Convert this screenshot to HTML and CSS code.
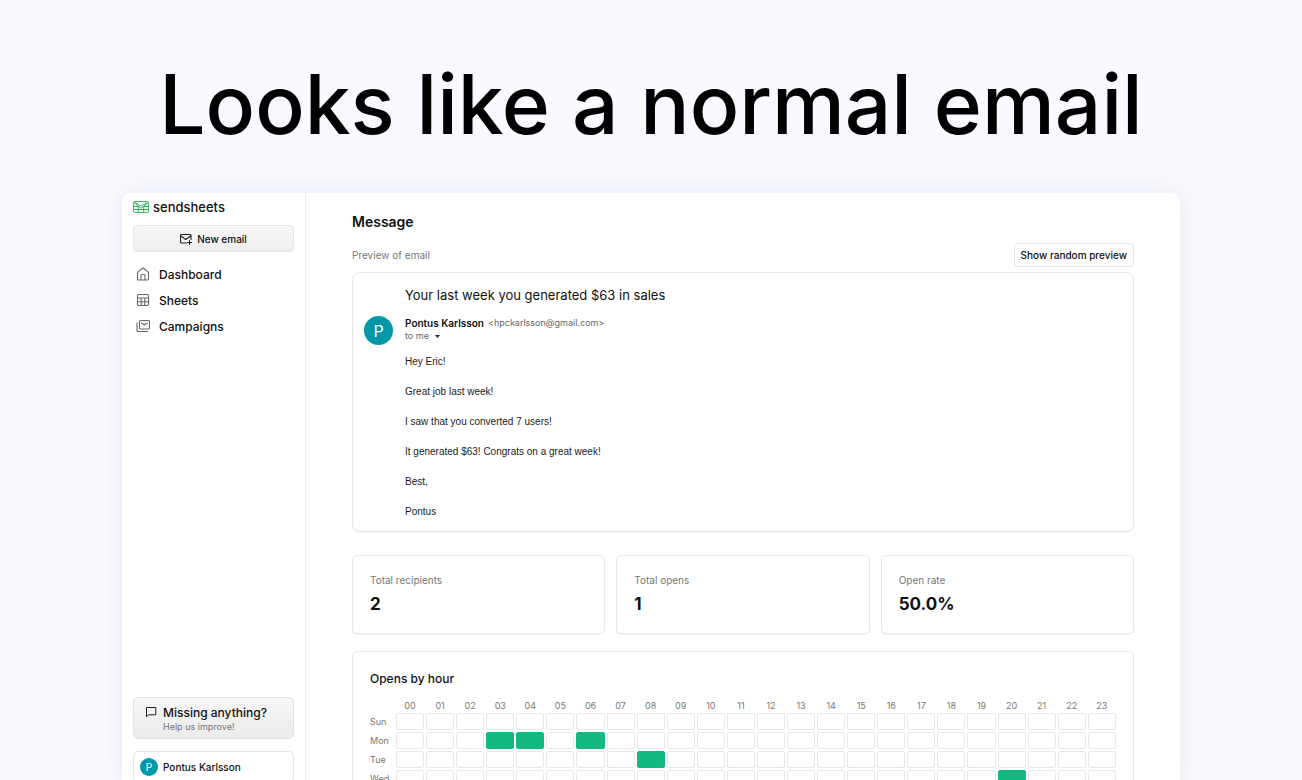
FILE: index.html
```html
<!DOCTYPE html>
<html lang="en">
<head>
    <meta charset="UTF-8">
    <meta name="viewport" content="width=device-width, initial-scale=1.0">
    <title>Sendsheets</title>
    <link rel="stylesheet" href="styles.css">
</head>
<body>
    <h1 class="headline">Looks like a normal email</h1>

    <div class="app">
        <aside class="sidebar">
            <a href="#" class="logo">
                <svg width="16" height="12" viewBox="0 0 16 12" fill="none" stroke="#35ad5c">
                    <rect x="0.6" y="0.6" width="14.8" height="10.8" rx="0.8"/>
                    <path d="M0.800 1.200l4.700 4.200M15.200 1.200l-4.700 4.200M2.500 1.800l4.300 2.700a2.200 2.200 0 0 0 2.400 0l4.300-2.700M0.600 5.500h4.900L8 7.200l2.500-1.700h4.900M0.600 8.500h14.800M5.300 5.500v6M10.700 5.500v6"/>
                </svg>
                sendsheets
            </a>
            <button class="new-email">
                <svg width="12" height="12" viewBox="0 0 24 24" fill="none" stroke="#222" stroke-width="2.2" stroke-linecap="round" stroke-linejoin="round">
                    <path d="M13 20H3a2 2 0 0 1-2-2V5a2 2 0 0 1 2-2h17a2 2 0 0 1 2 2v8M2 6l9.500 7L21 6M19 15v8M15 19h8"/>
                </svg>
                New email
            </button>
            <nav class="menu">
                <a href="#">
                    <svg width="14" height="14" viewBox="0 0 14 14" fill="none" stroke="#666" stroke-width="1.1" stroke-linejoin="round">
                        <path d="M1.500 5.700a1 1 0 0 1 0.400-0.800L6.400 1.300a1 1 0 0 1 1.200 0l4.500 3.600a1 1 0 0 1 0.400 0.800V12a1 1 0 0 1-1 1h-9a1 1 0 0 1-1-1zM5 13V8.500a1 1 0 0 1 1-1h2a1 1 0 0 1 1 1V13"/>
                    </svg>
                    Dashboard
                </a>
                <a href="#">
                    <svg width="14" height="14" viewBox="0 0 14 14" fill="none" stroke="#666" stroke-width="1.1">
                        <rect x="1.500" y="1.500" width="11" height="11" rx="1.200"/>
                        <path d="M1.500 5h11M1.500 8.700h11M5.200 5v7.500M8.800 5v7.500"/>
                    </svg>
                    Sheets
                </a>
                <a href="#">
                    <svg width="14" height="14" viewBox="0 0 14 14" fill="none" stroke="#666" stroke-width="1.1" stroke-linecap="round" stroke-linejoin="round">
                        <rect x="3.500" y="1.500" width="10" height="8.500" rx="1.200"/>
                        <path d="M5.500 4l3 2 3-2M1 3.800v7.700a1 1 0 0 0 1 1h9.500"/>
                    </svg>
                    Campaigns
                </a>
            </nav>
            <div class="sidebar-bottom">
                <button class="feedback">
                    <svg width="12" height="12" viewBox="0 0 12 12" fill="none" stroke="#222" stroke-linejoin="round">
                        <path d="M1.500 1.500h9.300v7.300H3.500L1.500 10.800z"/>
                    </svg>
                    <span>
                        <strong>Missing anything?</strong>
                        <small>Help us improve!</small>
                    </span>
                </button>
                <button class="user">
                    <span class="avatar avatar-small">P</span>
                    Pontus Karlsson
                </button>
            </div>
        </aside>

        <main class="content">
            <h2>Message</h2>
            <div class="preview-bar">
                <span>Preview of email</span>
                <button class="random-preview">Show random preview</button>
            </div>

            <article class="card email">
                <h3>Your last week you generated $63 in sales</h3>
                <span class="avatar">P</span>
                <div class="email-body">
                    <div class="sender">
                        <strong>Pontus Karlsson</strong>
                        <span>&lt;hpckarlsson@gmail.com&gt;</span>
                    </div>
                    <div class="recipient">
                        to me
                        <svg width="5" height="3" viewBox="0 0 5 3"><path d="M0 0h5L2.500 3z" fill="#222"/></svg>
                    </div>
                    <div class="email-text">
                        <p>Hey Eric!</p>
                        <p>Great job last week!</p>
                        <p>I saw that you converted 7 users!</p>
                        <p>It generated $63! Congrats on a great week!</p>
                        <p>Best,</p>
                        <p>Pontus</p>
                    </div>
                </div>
            </article>

            <section class="stats">
                <div class="card stat">
                    <p>Total recipients</p>
                    <strong>2</strong>
                </div>
                <div class="card stat">
                    <p>Total opens</p>
                    <strong>1</strong>
                </div>
                <div class="card stat">
                    <p>Open rate</p>
                    <strong>50.0%</strong>
                </div>
            </section>

            <section class="card hours">
                <h3>Opens by hour</h3>
                <table>
                    <thead>
                        <tr id="hour-row"><td class="day"></td></tr>
                    </thead>
                    <tbody id="hour-body"></tbody>
                </table>
            </section>
        </main>
    </div>

    <script>
        const days = ['Sun', 'Mon', 'Tue', 'Wed', 'Thu', 'Fri', 'Sat'];
        const opens = { Mon: [3, 4, 6], Tue: [8], Wed: [20] };

        const hourRow = document.getElementById('hour-row');
        for (let h = 0; h < 24; h++) {
            const th = document.createElement('th');
            th.scope = 'col';
            th.textContent = String(h).padStart(2, '0');
            hourRow.appendChild(th);
        }

        const hourBody = document.getElementById('hour-body');
        days.forEach(day => {
            const row = document.createElement('tr');
            row.innerHTML = `<th scope="row">${day}</th>`;
            for (let h = 0; h < 24; h++) {
                const cell = document.createElement('td');
                cell.className = (opens[day] || []).includes(h) ? 'cell active' : 'cell';
                row.appendChild(cell);
            }
            hourBody.appendChild(row);
        });
    </script>
</body>
</html>
```
FILE: styles.css
```css
* {
    margin: 0;
    padding: 0;
    box-sizing: border-box;
}

body {
    height: 100vh;
    overflow: hidden;
    display: flex;
    flex-direction: column;
    padding: 54px 122px 0;
    background-color: #f9faff;
    color: #111;
    font-family: 'Inter', sans-serif;
    font-size: 10px;
}

button {
    font-family: inherit;
    color: inherit;
    cursor: pointer;
}

a {
    color: inherit;
    text-decoration: none;
}

svg {
    flex-shrink: 0;
}

.headline {
    margin: 0 -60px 37px;
    font-size: 82px;
    line-height: 102px;
    font-weight: 500;
    color: #000;
    text-align: center;
    white-space: nowrap;
}

.app {
    flex: 1;
    min-height: 0;
    display: flex;
    margin-bottom: -2px;
    background: white;
    border-radius: 8px 8px 0 0;
    box-shadow: 0 0 24px rgba(30, 40, 90, 0.08);
}

/* Sidebar */
.sidebar {
    width: 184px;
    flex-shrink: 0;
    display: flex;
    flex-direction: column;
    padding: 6px 11px 0;
    border-right: 1px solid #ebebeb;
}

.logo {
    display: flex;
    align-items: center;
    gap: 4px;
    margin-bottom: 10px;
    font-size: 13px;
    line-height: 16px;
    font-weight: 500;
}

.new-email {
    display: flex;
    align-items: center;
    justify-content: center;
    gap: 5px;
    height: 27px;
    border: 1px solid #e5e5e5;
    border-radius: 4px;
    background: linear-gradient(#f6f6f6, #eee);
    font-size: 10px;
    font-weight: 500;
}

.menu {
    display: flex;
    flex-direction: column;
    padding: 9px 3px;
}

.menu a {
    display: flex;
    align-items: center;
    gap: 9px;
    height: 26px;
    font-size: 12px;
    font-weight: 500;
}

.sidebar-bottom {
    display: flex;
    flex-direction: column;
    gap: 12px;
    margin-top: auto;
}

.feedback {
    display: flex;
    gap: 6px;
    padding: 8px 11px 5px;
    border: 1px solid #e2e2e2;
    border-radius: 5px;
    background: linear-gradient(#f6f6f6, #ebebeb);
    text-align: left;
}

.feedback strong,
.feedback small {
    display: block;
}

.feedback strong {
    font-size: 12px;
    line-height: 14px;
    font-weight: 500;
}

.feedback small {
    font-size: 9px;
    line-height: 13px;
    color: #777;
}

.user {
    display: flex;
    align-items: center;
    gap: 5px;
    height: 31px;
    padding: 0 6px;
    border: 1px solid #e5e5e5;
    border-radius: 5px;
    background: white;
    font-size: 10px;
    font-weight: 500;
}

.avatar {
    display: flex;
    align-items: center;
    justify-content: center;
    width: 29px;
    height: 29px;
    border-radius: 50%;
    background: #0097a7;
    color: white;
    font-size: 16px;
    font-weight: 400;
}

.avatar-small {
    width: 18px;
    height: 18px;
    font-size: 10px;
}

/* Main content */
.content {
    flex: 1;
    min-width: 0;
    padding: 20px 46px 0;
}

.content h2 {
    font-size: 14px;
    line-height: 18px;
    font-weight: 600;
}

.preview-bar {
    display: flex;
    align-items: center;
    justify-content: space-between;
    margin: 12px 0 5px;
    color: #777;
}

.random-preview {
    height: 24px;
    padding: 0 6px;
    border: 1px solid #e5e5e5;
    border-radius: 4px;
    background: white;
    color: #111;
    font-size: 10px;
    font-weight: 500;
}

.card {
    border: 1px solid #e8e8e8;
    border-radius: 5px;
    background: white;
    box-shadow: 0 1px 1px rgba(0, 0, 0, 0.05);
}

.email {
    display: grid;
    grid-template-columns: 29px 1fr;
    gap: 12px;
    padding: 13px 11px 12px;
    border-radius: 8px;
}

.email h3 {
    grid-column: 2;
    font-size: 13px;
    line-height: 18px;
    font-weight: 400;
}

.sender {
    display: flex;
    align-items: center;
    gap: 4px;
    line-height: 14px;
}

.sender strong {
    font-weight: 600;
}

.sender span,
.recipient {
    font-size: 9px;
    color: #666;
}

.recipient {
    display: flex;
    align-items: center;
    gap: 6px;
    line-height: 12px;
}

.email-text {
    display: flex;
    flex-direction: column;
    gap: 15px;
    margin-top: 12px;
    color: #222;
    font-family: 'Liberation Sans', sans-serif;
    line-height: 15px;
}

.stats {
    display: grid;
    grid-template-columns: repeat(3, 1fr);
    gap: 11px;
    margin: 23px 0 17px;
}

.stat {
    padding: 17px 17px 18px;
}

.stat p {
    line-height: 14px;
    color: #777;
}

.stat strong {
    display: block;
    margin-top: 6px;
    font-size: 17px;
    line-height: 22px;
    font-weight: 700;
}

.hours {
    padding: 18px 17px;
}

.hours h3 {
    margin-bottom: 11px;
    font-size: 12px;
    line-height: 18px;
    font-weight: 500;
}

/* the negative margin cancels the outer cell spacing */
.hours table {
    width: calc(100% + 4px);
    margin: 0 -2px;
    table-layout: fixed;
    border-collapse: separate;
    border-spacing: 2px;
}

.hours th {
    color: #777;
    font-size: 9px;
    line-height: 10px;
    font-weight: 400;
}

.hours .day {
    width: 24px;
}

.hours tbody th {
    text-align: left;
}

.cell {
    height: 17px;
    border: 1px solid #e8e8e8;
    border-radius: 2px;
}

.cell.active {
    background: #14b981;
    border-color: #14b981;
}
```
